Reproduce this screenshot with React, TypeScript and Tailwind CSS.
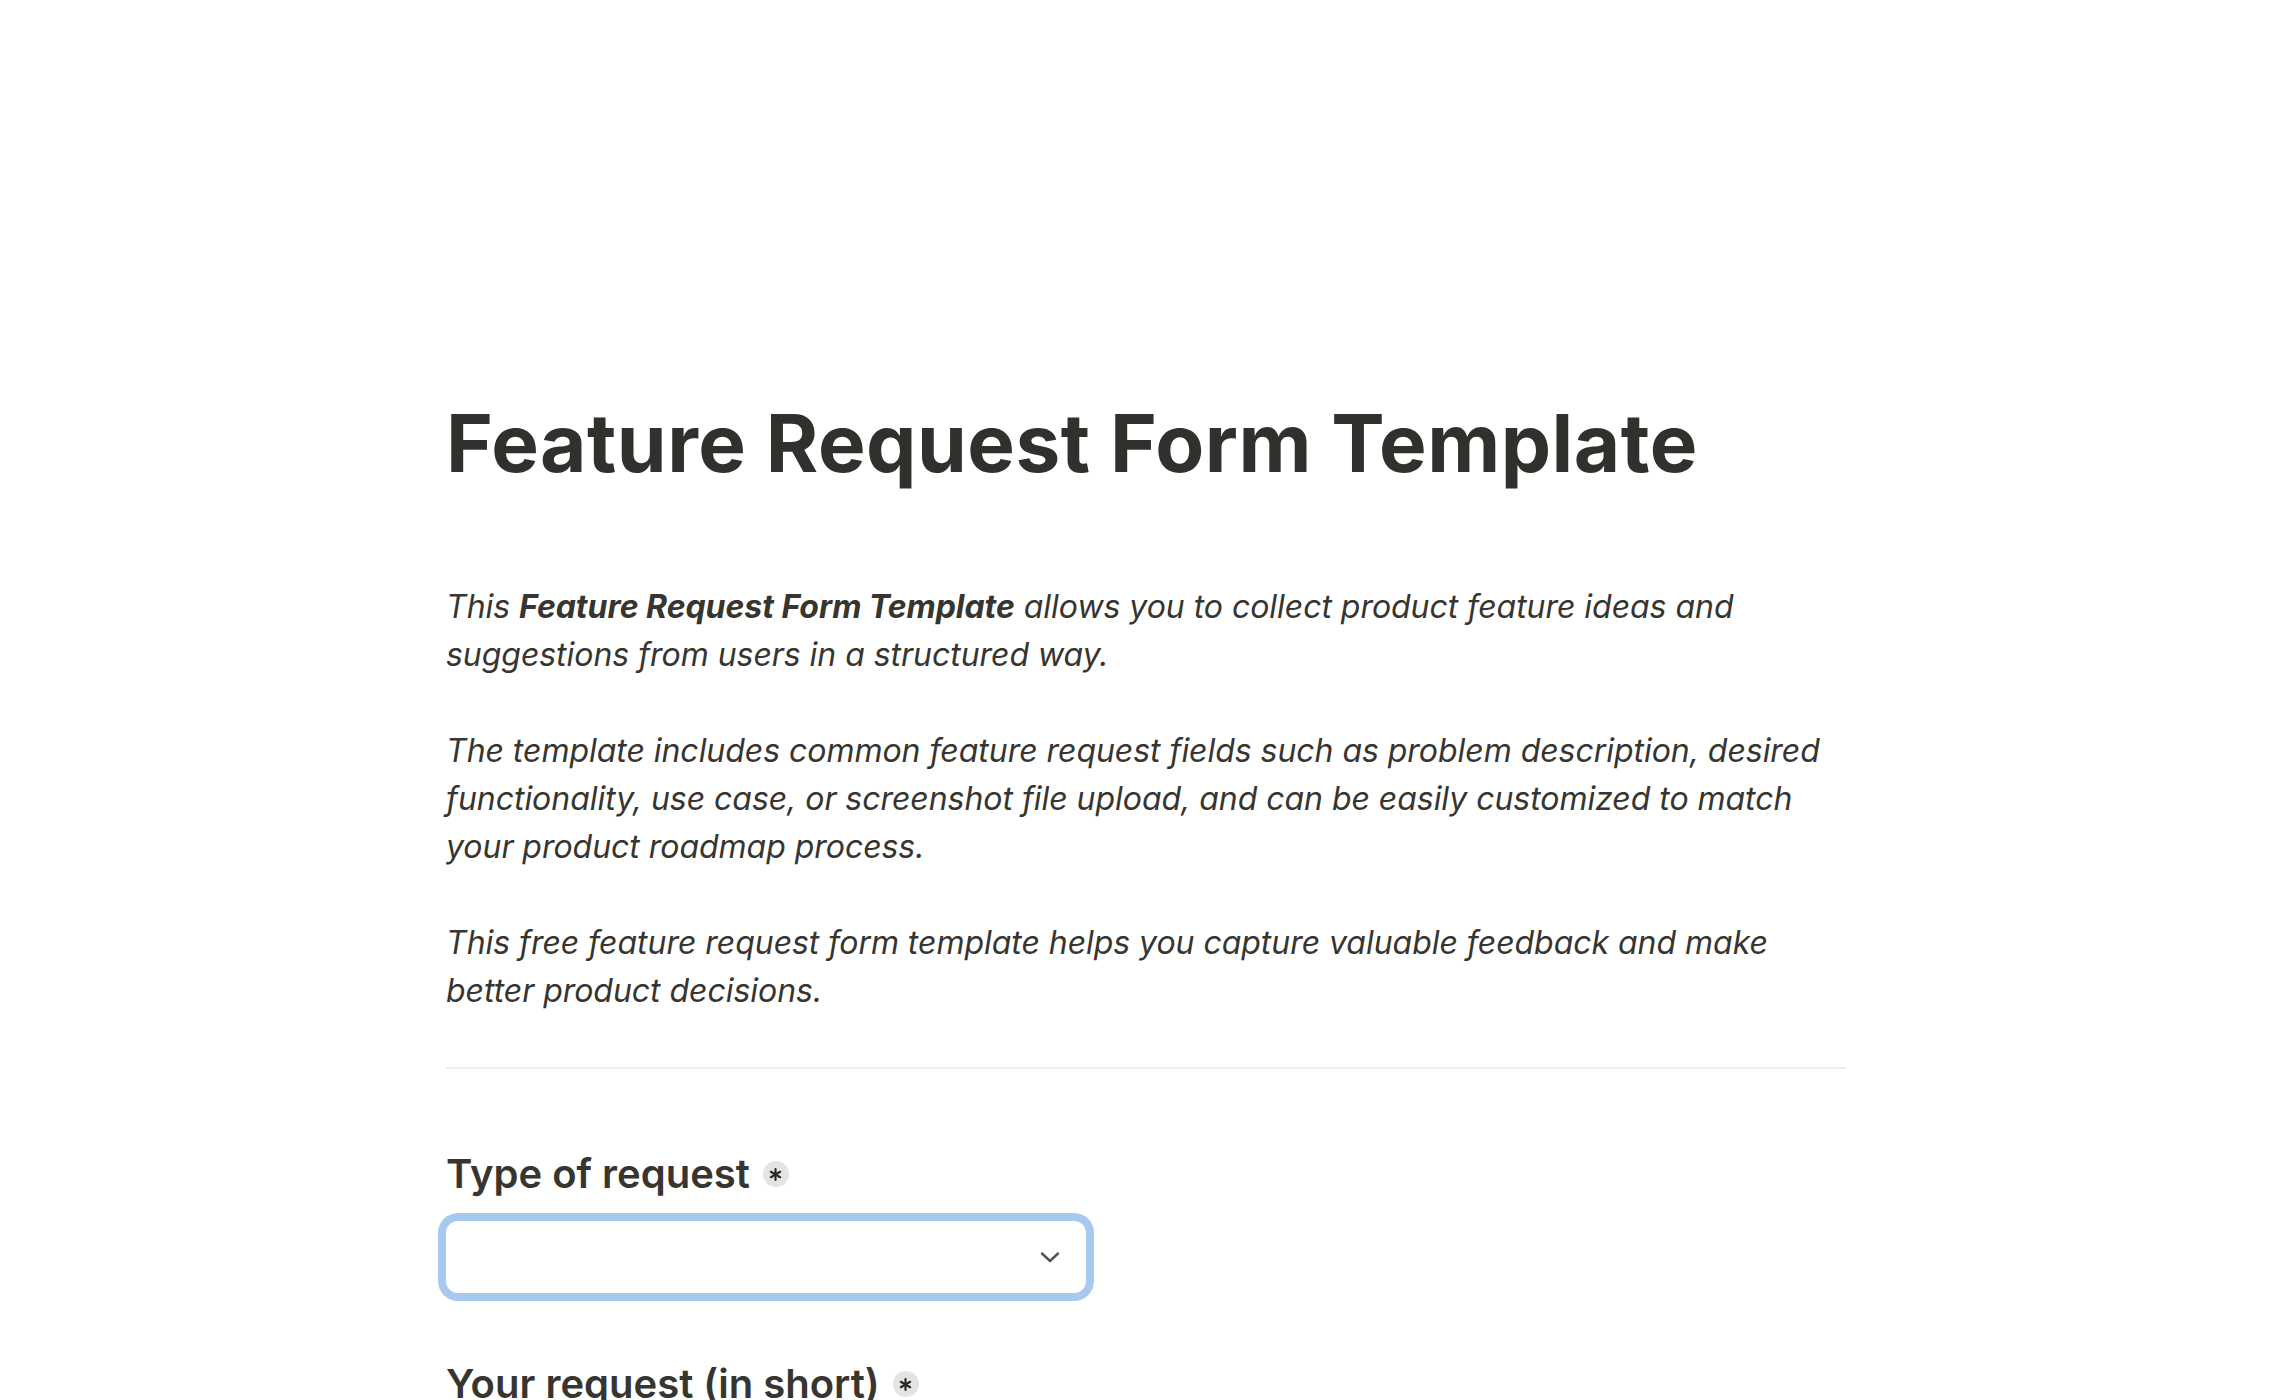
import React from "react";

function Asterisk() {
  return (
    <span className="inline-flex items-center justify-center w-[26px] h-[26px] rounded-full bg-[#e4e4e3] ml-[13px] shrink-0">
      <svg width="13" height="13" viewBox="0 0 12 12" fill="none" stroke="#2a2926" strokeWidth="2" strokeLinecap="round">
        <line x1="6" y1="1" x2="6" y2="11" />
        <line x1="1.7" y1="3.5" x2="10.3" y2="8.5" />
        <line x1="1.7" y1="8.5" x2="10.3" y2="3.5" />
      </svg>
    </span>
  );
}

function Label({ children }: { children: React.ReactNode }) {
  return (
    <div className="flex items-center h-[48px] text-[40px] leading-[48px] font-semibold text-[#37352f]">
      <span>{children}</span>
      <Asterisk />
    </div>
  );
}

export default function App() {
  return (
    <div
      className="min-h-[1400px] bg-white w-full overflow-hidden"
      style={{ fontFamily: "Inter, 'Noto Sans', sans-serif" }}
    >
      <div className="w-[1400px] mx-auto pt-[395px]">
        <h1 className="text-[80px] leading-[96px] font-bold text-[#32302c] tracking-[0.5px]">
          Feature Request Form Template
        </h1>

        <div className="mt-[92px] text-[32px] leading-[48px] italic text-[#37352f] tracking-[-0.04px]">
          <p>
            This <strong className="font-bold">Feature Request Form Template</strong> allows you to collect product
            feature ideas and suggestions from users in a structured way.
          </p>
          <p className="h-[48px]"></p>
          <p>
            The template includes common feature request fields such as problem description, desired functionality,
            use case, or screenshot file upload, and can be easily customized to match your product roadmap process.
          </p>
          <p className="h-[48px]"></p>
          <p>
            This free feature request form template helps you capture valuable feedback and make better product
            decisions.
          </p>
        </div>

        <div className="mt-[52px] h-[2px] bg-[#ededec]"></div>

        <div className="mt-[81px]">
          <Label>Type of request</Label>
          <div className="mt-[23px] w-[640px] h-[72px] rounded-[12px] bg-white shadow-[0_0_0_8px_#a6c9ef] flex items-center justify-end pr-[26px]">
            <svg width="20" height="11" viewBox="0 0 20 11" fill="none" stroke="#55534e" strokeWidth="2.4" strokeLinecap="round" strokeLinejoin="round">
              <polyline points="2,1.5 10,9 18,1.5" />
            </svg>
          </div>
        </div>

        <div className="mt-[67px]">
          <Label>Your request (in short)</Label>
        </div>
      </div>
    </div>
  );
}
